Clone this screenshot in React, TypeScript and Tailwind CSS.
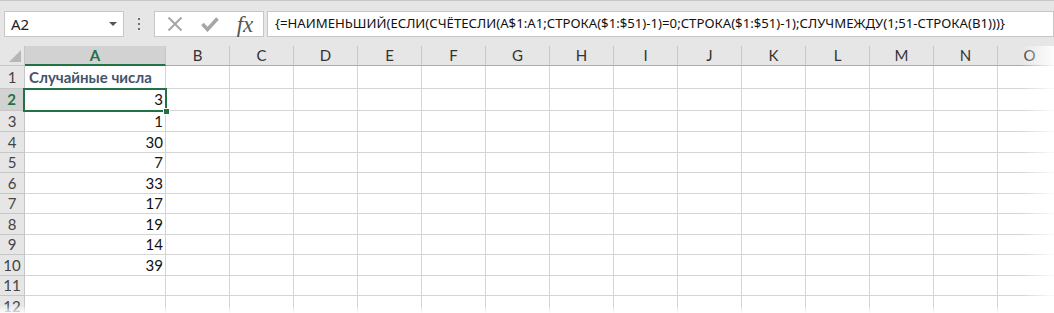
import React from "react";

const cols = ["B", "C", "D", "E", "F", "G", "H", "I", "J", "K", "L", "M", "N", "O"];

const rows: { n: number; h: string; a: string }[] = [
  { n: 1, h: "h-[23px]", a: "Случайные числа" },
  { n: 2, h: "h-[22px]", a: "3" },
  { n: 3, h: "h-[21px]", a: "1" },
  { n: 4, h: "h-[21px]", a: "30" },
  { n: 5, h: "h-[20px]", a: "7" },
  { n: 6, h: "h-[21px]", a: "33" },
  { n: 7, h: "h-[20px]", a: "17" },
  { n: 8, h: "h-[21px]", a: "19" },
  { n: 9, h: "h-[20px]", a: "14" },
  { n: 10, h: "h-[21px]", a: "39" },
  { n: 11, h: "h-[20px]", a: "" },
  { n: 12, h: "h-[21px]", a: "" },
];

const cellFont = { fontFamily: "Lato, 'Noto Sans', sans-serif" };

export default function App() {
  return (
    <div className="relative w-[1054px] h-[313px] overflow-hidden bg-white">
      {/* formula bar */}
      <div className="h-[46px] bg-[#e6e6e6] border-t border-[#c6c6c6] flex items-start pt-[10px] pl-[4px]">
        <div className="w-[120px] h-[26px] bg-white border border-[#c6c6c6] flex items-center justify-between pl-[6px] pr-[6px]">
          <span className="text-[15px] text-[#222]" style={{ fontFamily: "'Noto Sans', sans-serif" }}>A2</span>
          <span className="w-0 h-0 border-l-[4px] border-r-[4px] border-t-[4px] border-l-transparent border-r-transparent border-t-[#555]" />
        </div>
        <div className="w-[30px] h-[26px] flex flex-col items-center justify-center gap-[3px]">
          <span className="w-[2px] h-[2px] bg-[#707070]" />
          <span className="w-[2px] h-[2px] bg-[#707070]" />
          <span className="w-[2px] h-[2px] bg-[#707070]" />
        </div>
        <div className="w-[110px] h-[26px] bg-white border border-[#c6c6c6] flex items-center">
          <div className="w-[38px] flex justify-center pl-[2px]">
            <svg width="16" height="16" viewBox="0 0 16 16">
              <path d="M1.5 1.5 L14.5 14.5 M14.5 1.5 L1.5 14.5" stroke="#a6a6a6" strokeWidth="2" fill="none" />
            </svg>
          </div>
          <div className="w-[34px] flex justify-center">
            <svg width="18" height="16" viewBox="0 0 18 16">
              <path d="M1.5 8 L6.5 13.5 L16.5 2.5" stroke="#a6a6a6" strokeWidth="3.5" fill="none" />
            </svg>
          </div>
          <div className="w-[36px] flex justify-center">
            <span className="text-[23px] leading-none italic text-[#555]" style={{ fontFamily: "'Liberation Serif', serif" }}>fx</span>
          </div>
        </div>
        <div className="ml-[3px] flex-1 h-[26px] bg-white border border-[#c6c6c6] flex items-center pl-[7px] overflow-hidden whitespace-nowrap">
          <span className="text-[13.2px] text-[#111]" style={{ fontFamily: "'Noto Sans', sans-serif" }}>
            {"{=НАИМЕНЬШИЙ(ЕСЛИ(СЧЁТЕСЛИ(A$1:A1;СТРОКА($1:$51)-1)=0;СТРОКА($1:$51)-1);СЛУЧМЕЖДУ(1;51-СТРОКА(B1)))}"}
          </span>
        </div>
      </div>

      {/* sheet */}
      <div style={cellFont}>
        <div className="flex h-[20px] bg-[#e6e6e6]">
          <div className="w-[25px] shrink-0 border-r border-b border-[#c6c6c6] relative">
            <svg className="absolute right-[3px] bottom-[3px]" width="12" height="12" viewBox="0 0 12 12">
              <path d="M12 0 L12 12 L0 12 Z" fill="#b7b7b7" />
            </svg>
          </div>
          <div className="w-[141px] shrink-0 bg-[#d2d2d2] border-r border-[#c6c6c6] border-b-2 border-b-[#217346] flex items-center justify-center text-[15px] font-bold text-[#217346]">
            A
          </div>
          {cols.map((c) => (
            <div key={c} className="w-[64px] shrink-0 border-r border-b border-[#c6c6c6] border-b-[#ababab] flex items-center justify-center text-[15px] text-[#333]">
              {c}
            </div>
          ))}
        </div>
        {rows.map((r) => (
          <div key={r.n} className={`flex ${r.h}`}>
            <div
              className={`w-[25px] shrink-0 border-r border-b flex items-center justify-center text-[15px] ${
                r.n === 2
                  ? "bg-[#d2d2d2] text-[#217346] font-bold border-r-2 border-r-[#217346] border-b-[#c6c6c6]"
                  : "bg-[#e6e6e6] text-[#444] border-[#c6c6c6]"
              }`}
            >
              {r.n}
            </div>
            <div
              className={`w-[141px] shrink-0 border-r border-b border-[#d4d4d4] flex items-center ${
                r.n === 1 ? "justify-start pl-[4px] font-bold text-[#44546a] text-[15px]" : "justify-end pr-[2px] text-[15px] text-[#111]"
              }`}
            >
              {r.a}
            </div>
            {cols.map((c) => (
              <div key={c} className="w-[64px] shrink-0 border-r border-b border-[#d4d4d4]" />
            ))}
          </div>
        ))}
      </div>

      {/* selection on A2 */}
      <div className="absolute left-[23px] top-[88px] w-[144px] h-[24px] border-2 border-[#217346]" />
      <div className="absolute left-[163px] top-[108px] w-[7px] h-[7px] bg-[#217346] border border-white" />

      {/* right and bottom fade */}
      <div className="absolute right-0 top-[46px] bottom-0 w-[34px] bg-gradient-to-r from-white/0 to-white/90" />
      <div className="absolute left-0 right-0 bottom-0 h-[8px] bg-gradient-to-b from-white/0 to-white/90" />
    </div>
  );
}
